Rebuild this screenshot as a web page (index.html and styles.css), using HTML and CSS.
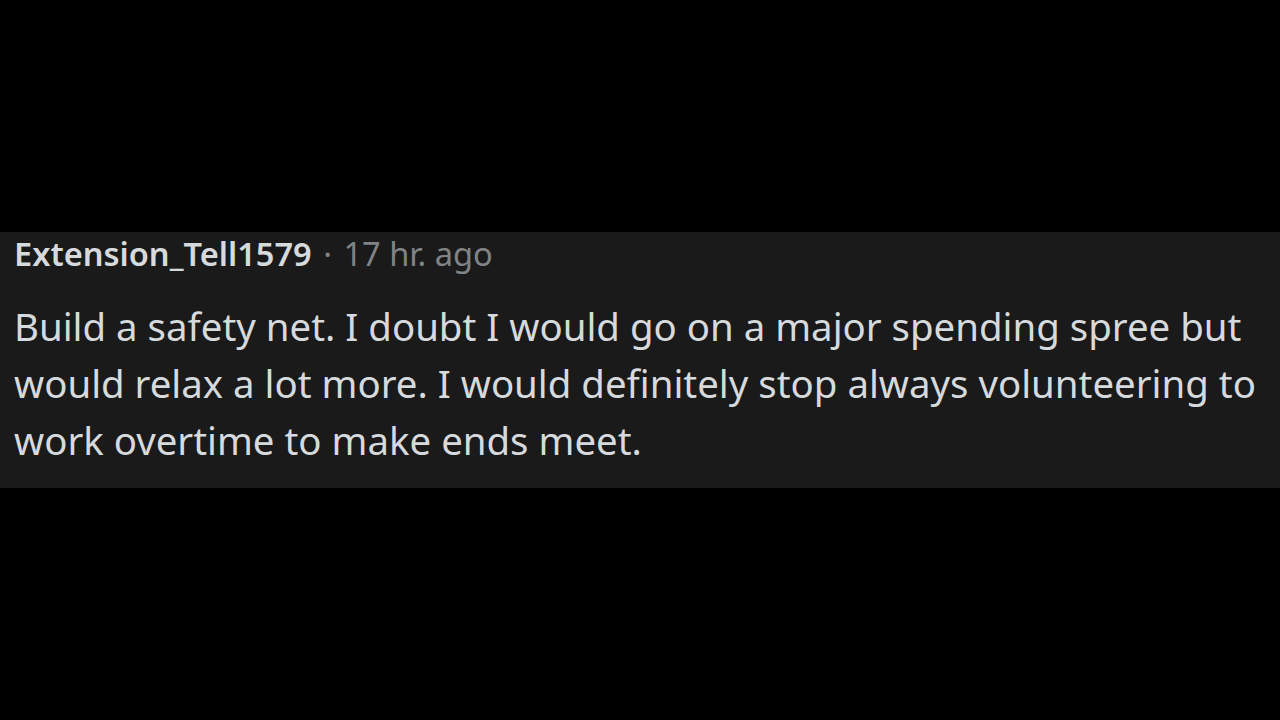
FILE: index.html
```html
<!DOCTYPE html>
<html lang="en">
<head>
  <meta charset="UTF-8">
  <title>Comment</title>
  <link rel="stylesheet" href="styles.css">
</head>
<body>
  <div class="comment">
    <div class="comment-meta">
      <span class="author">Extension_Tell1579</span>
      <span class="dot">&middot;</span>
      <span class="time">17 hr. ago</span>
    </div>
    <p class="comment-body">Build a safety net. I doubt I would go on a major spending spree but would relax a lot more. I would definitely stop always volunteering to work overtime to make ends meet.</p>
  </div>
</body>
</html>
```

FILE: styles.css
```css
body {
  margin: 0;
  background: #000;
  height: 720px;
  display: flex;
  flex-direction: column;
  justify-content: center;
  font-family: 'Noto Sans', 'Open Sans', sans-serif;
}

.comment {
  background: #1a1a1b;
  padding: 2px 14px 19px 14px;
}

.comment-meta {
  font-size: 32.6px;
  line-height: 40px;
  color: #818384;
}

.author {
  color: #d7dadc;
  font-weight: 600;
}

.dot {
  margin: 0 3px;
}

.comment-body {
  margin: 24px 0 0 0;
  font-size: 38.4px;
  line-height: 57px;
  color: #d7dadc;
}
```
